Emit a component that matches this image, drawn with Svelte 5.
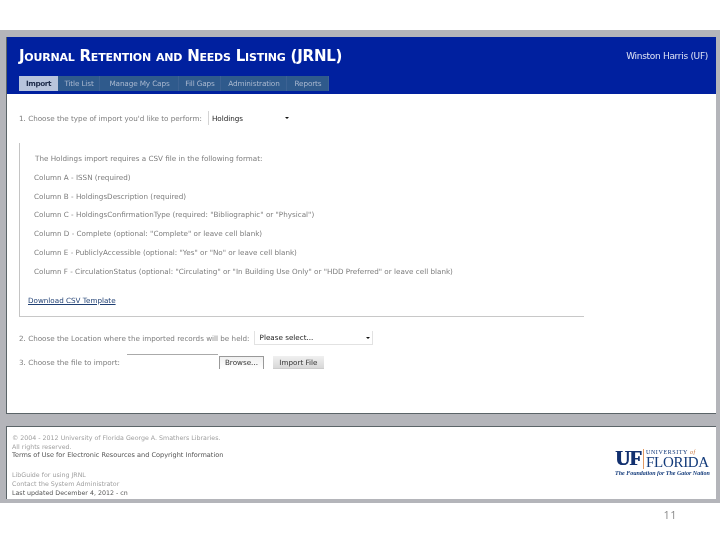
<script>
  const tabs = ['Title List', 'Manage My Caps', 'Fill Gaps', 'Administration', 'Reports'];
  const columns = [
    'Column A - ISSN (required)',
    'Column B - HoldingsDescription (required)',
    'Column C - HoldingsConfirmationType (required: "Bibliographic" or "Physical")',
    'Column D - Complete (optional: "Complete" or leave cell blank)',
    'Column E - PubliclyAccessible (optional: "Yes" or "No" or leave cell blank)',
    'Column F - CirculationStatus (optional: "Circulating" or "In Building Use Only" or "HDD Preferred" or leave cell blank)'
  ];
</script>

<div class="slide">
  <div class="frame">
    <main class="window">
      <header class="banner">
        <div class="title-row">
          <h1>Journal Retention and Needs Listing (JRNL)</h1>
          <span class="user">Winston Harris (UF)</span>
        </div>
        <nav class="tabs">
          <span class="tab active">Import</span>
          {#each tabs as t}<span class="tab">{t}</span>{/each}
        </nav>
      </header>
      <div class="content">
        <div class="row first">
          <span>1. Choose the type of import you'd like to perform:</span>
          <span class="select holdings"><span>Holdings</span><i class="caret"></i></span>
        </div>
        <section class="info">
          <p class="lead">The Holdings import requires a CSV file in the following format:</p>
          {#each columns as c}<p>{c}</p>{/each}
          <a class="dl" href="#top">Download CSV Template</a>
        </section>
        <div class="row second">
          <span>2. Choose the Location where the imported records will be held:</span>
          <span class="select location"><span>Please select...</span><i class="caret"></i></span>
        </div>
        <div class="row third">
          <span>3. Choose the file to import:</span>
          <span class="file"></span>
          <span class="btn browse">Browse...</span>
          <span class="btn import">Import File</span>
        </div>
      </div>
    </main>
    <footer class="foot">
      <div class="foot-text">
        <div class="faint">© 2004 - 2012 University of Florida George A. Smathers Libraries.</div>
        <div class="faint">All rights reserved.</div>
        <div class="terms">Terms of Use for Electronic Resources and Copyright Information</div>
        <div class="faint gap">LibGuide for using JRNL</div>
        <div class="faint">Contact the System Administrator</div>
        <div>Last updated December 4, 2012 - cn</div>
      </div>
      <div class="logo">
        <div class="logo-top">
          <span class="uf">UF</span>
          <span class="rule"></span>
          <div class="uni">
            <span class="u1">UNIVERSITY <em>of</em></span>
            <span class="u2">FLORIDA</span>
          </div>
        </div>
        <div class="tag">The Foundation for The Gator Nation</div>
      </div>
    </footer>
  </div>
  <div class="page">11</div>
</div>

<style>
  :global(body) { margin: 0; background: #fff; }
  .slide { width: 720px; height: 540px; padding-top: 30px; box-sizing: border-box; background: #fff; font-family: "DejaVu Sans", sans-serif; overflow: hidden; }
  .frame { height: 473px; box-sizing: border-box; background: #b4b5ba; padding: 7px 4px 3px 6px; display: flex; flex-direction: column; gap: 12px; }
  .window { height: 377px; box-sizing: border-box; background: #fff; border-bottom: 1px solid #5b6468; border-left: 1px solid #5b6468; display: flex; flex-direction: column; }
  .banner { height: 57px; background: #00209f; padding: 0 8px 3px 12px; box-sizing: border-box; display: flex; flex-direction: column; justify-content: flex-end; flex: none; }
  .title-row { display: flex; justify-content: space-between; height: 39px; padding-top: 9px; box-sizing: border-box; }
  h1 { margin: 0; color: #fff; font: 700 15px/20px "DejaVu Sans", sans-serif; font-variant: small-caps; letter-spacing: -0.22px; white-space: nowrap; filter: blur(0.25px); }
  .user { color: #dfe4f5; font: 9px/20px "DejaVu Sans", sans-serif; letter-spacing: -0.3px; filter: blur(0.3px); }
  .tabs { display: grid; grid-template-columns: 39px 42px 79px 42px 66px 42px; width: fit-content; height: 15px; }
  .tab { background: #2f5a8c; color: #a9b8cf; font-size: 7.3px; line-height: 15px; text-align: center; box-shadow: inset -1px 0 0 #3c6293; white-space: nowrap; letter-spacing: -0.15px; filter: blur(0.25px); }
  .tab.active { background: #b8c4dc; color: #23304f; font-weight: 700; box-shadow: none; letter-spacing: -0.4px; }
  .content { flex: 1; padding: 0 0 0 12px; color: #7c7c7c; font-size: 7.2px; }
  .row { display: flex; align-items: center; white-space: nowrap; filter: blur(0.3px); }
  .first { height: 14px; margin-top: 17px; }
  .select { display: inline-flex; justify-content: space-between; align-items: center; color: #222; box-sizing: border-box; }
  .holdings { width: 85px; height: 14px; margin-left: 6px; padding: 0 4px 0 3px; border-left: 1px solid #d4d4d4; }
  .caret { width: 0; height: 0; border: 2.5px solid transparent; border-top-color: #111; border-bottom: 0; }
  .info { margin-top: 18px; width: 565px; height: 174px; box-sizing: border-box; border-left: 1px solid #c4c4c4; border-bottom: 1px solid #c8c8c8; padding: 7px 0 0 14px; }
  .info p { margin: 0; height: 18.8px; line-height: 18.8px; white-space: nowrap; color: #7c7c7c; filter: blur(0.3px); }
  .info .lead { padding-left: 1px; }
  .dl { display: block; margin: 12px 0 0 -6px; color: #1f3f73; font-size: 7.2px; line-height: 13px; width: fit-content; filter: blur(0.25px); }
  .second { height: 14px; margin-top: 14px; }
  .location { width: 119px; height: 14px; margin-left: 4px; padding: 0 2px 0 5px; border: 1px solid #e2e2e2; border-top: 0; }
  .third { height: 14px; margin-top: 10px; }
  .file { width: 91px; height: 12px; margin: -3px 1px 0 7px; border-top: 1px solid #aaa; }
  .btn { height: 13px; line-height: 13px; box-sizing: border-box; text-align: center; color: #333; font-size: 7.2px; }
  .browse { width: 45px; border: 1px solid #999; border-bottom: 0; line-height: 12px; background: linear-gradient(#f0f0f0, #fff); }
  .import { width: 51px; margin-left: 9px; background: linear-gradient(#f0f0f0, #d8d8d8); border-bottom: 1px solid #ccc; }
  .foot { height: 73px; box-sizing: border-box; background: #fff; border-top: 1px solid #5b6468; border-left: 1px solid #5b6468; padding: 6px 5px 0 5px; display: flex; justify-content: space-between; }
  .foot-text { font-size: 6.3px; line-height: 9.2px; color: #555; white-space: nowrap; filter: blur(0.3px); }
  .terms { font-size: 6.55px; }
  .faint { color: #a0a0a0; }
  .gap { margin-top: 9px; }
  .logo { margin-top: 16px; width: 96px; color: #123a7a; filter: blur(0.2px); }
  .logo-top { display: flex; align-items: flex-start; height: 21px; }
  .uf { font: 700 21px/19px "Liberation Serif", serif; color: #12306f; letter-spacing: -1px; width: 27px; text-shadow: 0.7px 0 0 #12306f; }
  .rule { width: 1px; height: 20px; background: #e39a62; margin: 0 2px 0 1px; }
  .uni { display: flex; flex-direction: column; font-family: "Liberation Serif", serif; }
  .u1 { font-size: 6px; line-height: 7px; letter-spacing: 0.6px; white-space: nowrap; }
  .u1 em { color: #c9743a; }
  .u2 { font-size: 15px; line-height: 13px; letter-spacing: -0.3px; }
  .tag { font: italic 600 6px/7px "Liberation Serif", serif; white-space: nowrap; }
  .page { margin: 5px 43px 0 0; text-align: right; color: #8a8a8a; font: 11px/14px "Open Sans", sans-serif; letter-spacing: 0.5px; filter: blur(0.2px); }
</style>
